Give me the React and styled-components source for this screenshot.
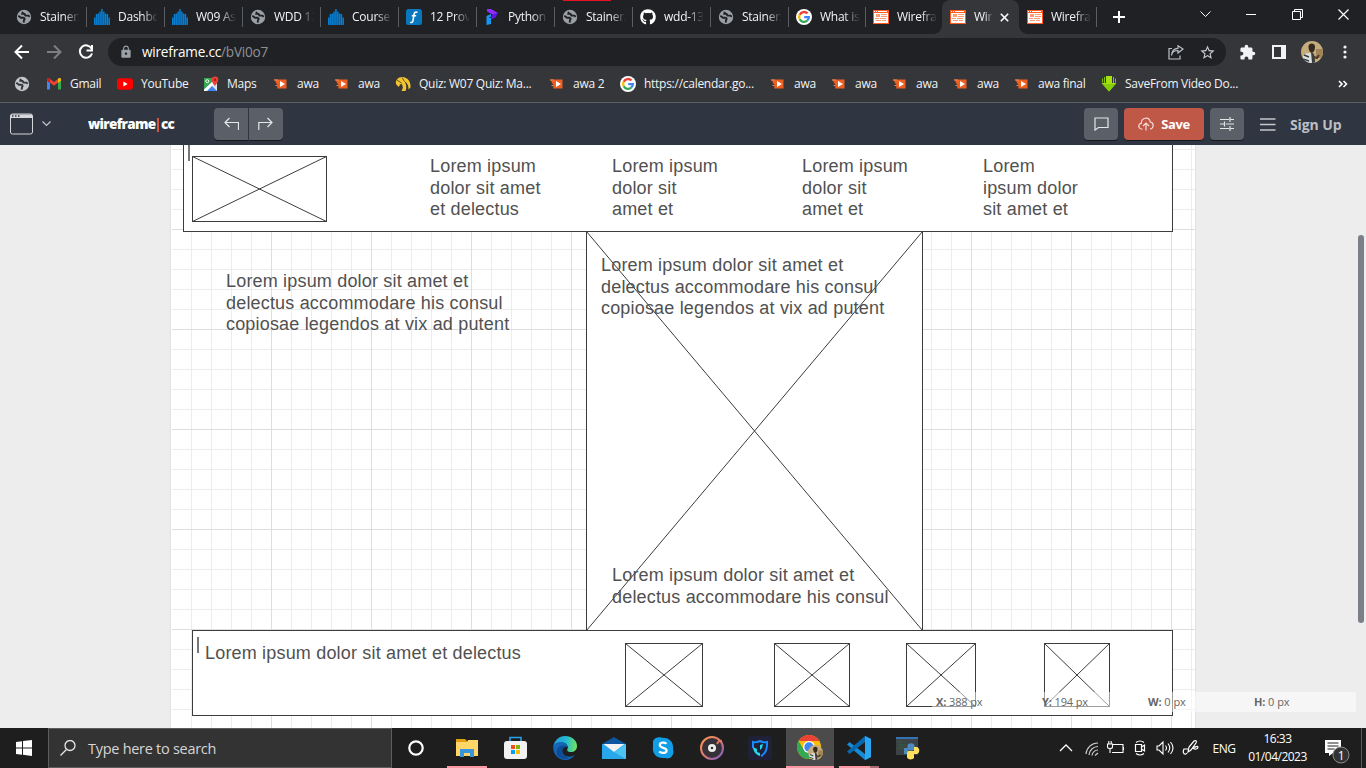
import React from 'react';
import styled, { createGlobalStyle, css } from 'styled-components';
import { MdExtension, MdStarBorder, MdLock } from 'react-icons/md';
import { FaGithub } from 'react-icons/fa';

const GlobalStyle = createGlobalStyle`
  * { box-sizing: border-box; }
  html, body { margin: 0; padding: 0; overflow: hidden; }
  body { font-family: "Open Sans", "Noto Sans", sans-serif; font-size: 12px; }
  svg { display: block; flex: none; }
`;

const Screen = styled.div`
  width: 1366px;
  height: 768px;
  display: flex;
  flex-direction: column;
  overflow: hidden;
  background: #ededed;
`;

/* ---------- Browser chrome ---------- */
const TabStrip = styled.div`
  position: relative;
  height: 34px;
  flex: none;
  display: flex;
  padding-left: 8px;
  background: #202124;
`;
const TopMark = styled.div`
  position: absolute;
  left: 563px;
  top: 0;
  width: 48px;
  height: 1px;
  background: #e81123;
`;
const Tab = styled.div`
  position: relative;
  width: ${p => p.$w}px;
  height: 34px;
  flex: none;
  display: flex;
  align-items: center;
  gap: 8px;
  padding-left: 8px;
  color: #f1f3f4;
  ${p => p.$divider && css`
    &::before {
      content: '';
      position: absolute;
      left: 0;
      top: 7px;
      width: 1px;
      height: 20px;
      background: #5a5d61;
    }
  `}
  ${p => p.$active && css`
    background: #35363a;
    border-radius: 8px 8px 0 0;
    &::before, &::after {
      content: '';
      position: absolute;
      bottom: 0;
      width: 8px;
      height: 8px;
    }
    &::before { left: -8px; background: radial-gradient(circle at 0 0, transparent 7.5px, #35363a 8px); }
    &::after { right: -8px; background: radial-gradient(circle at 100% 0, transparent 7.5px, #35363a 8px); }
  `}
`;
const TabTitle = styled.span`
  width: ${p => p.$w}px;
  flex: none;
  overflow: hidden;
  white-space: nowrap;
  line-height: 16px;
  letter-spacing: -0.25px;
  mask-image: linear-gradient(90deg, #000 ${p => p.$w - p.$fade}px, transparent ${p => p.$w + 1}px);
`;
const NewTab = styled.div`
  position: relative;
  display: flex;
  align-items: center;
  padding-left: 17px;
  flex: 1;
  &::before {
    content: '';
    position: absolute;
    left: 0;
    top: 7px;
    width: 1px;
    height: 20px;
    background: #5a5d61;
  }
`;
const WindowControls = styled.div`
  display: flex;
  width: 184px;
  height: 29px;
  flex: none;
`;
const WindowButton = styled.div`
  width: 46px;
  display: grid;
  place-items: center;
`;

const AddressRow = styled.div`
  height: 36px;
  flex: none;
  display: flex;
  align-items: center;
  padding: 0 15px 0 14px;
  background: #35363a;
`;
const NavButtons = styled.div`
  width: 94px;
  display: flex;
  gap: 16px;
`;
const Omnibox = styled.div`
  width: 1118px;
  height: 28px;
  flex: none;
  display: flex;
  align-items: center;
  gap: 15px;
  padding: 0 10px 0 11px;
  border-radius: 14px;
  background: #202124;
`;
const Url = styled.div`
  flex: 1;
  margin-left: -6px;
  font-size: 13.6px;
  line-height: 20px;
  letter-spacing: -0.22px;
  color: #fff;
  span { color: #8e9195; }
`;
const Extensions = styled.div`
  flex: 1;
  display: flex;
  align-items: center;
  justify-content: space-between;
  padding-left: 13px;
`;

const BookmarkBar = styled.div`
  height: 32px;
  flex: none;
  display: flex;
  align-items: center;
  padding: 0 18px 4px 14px;
  background: #35363a;
  color: #f1f3f4;
`;
const Bookmark = styled.div`
  width: ${p => p.$w}px;
  flex: none;
  display: flex;
  align-items: center;
  gap: 8px;
  white-space: nowrap;
  line-height: 16px;
  letter-spacing: -0.27px;
`;
const Overflow = styled.div`
  flex: 1;
  display: flex;
  justify-content: flex-end;
`;

/* ---------- Wireframe application ---------- */
const AppBar = styled.div`
  height: 43px;
  flex: none;
  display: flex;
  align-items: flex-start;
  padding: 5px 0 0 10px;
  border-top: 1px solid #5b5e63;
  background: #2f3541;
`;
const DeviceMenu = styled.div`
  width: 78px;
  height: 32px;
  display: flex;
  align-items: center;
  gap: 9px;
`;
const Brand = styled.div`
  width: 126px;
  font-size: 13.5px;
  font-weight: 800;
  line-height: 32px;
  letter-spacing: -0.68px;
  color: #fff;
  white-space: nowrap;
`;
const BrandBar = styled.i`
  display: inline-block;
  width: 2px;
  height: 14px;
  margin: 0 1.5px 0 2px;
  vertical-align: -3px;
  background: #d8543f;
`;
const ToolButton = styled.div`
  width: ${p => p.$w || 34}px;
  height: 32px;
  flex: none;
  display: flex;
  align-items: center;
  justify-content: center;
  gap: 7px;
  border-radius: ${p => p.$radius || '4px'};
  background: ${p => (p.$accent ? '#c05848' : '#5b5f68')};
  box-shadow: 0 1px 0 #15181d;
  color: #fff;
  font-size: 13px;
  font-weight: 700;
  letter-spacing: -0.4px;
`;
const HistoryGroup = styled.div`
  display: flex;
  gap: 1px;
  flex: 1;
`;
const Actions = styled.div`
  display: flex;
  gap: 6px;
`;
const SignUp = styled.div`
  width: 106px;
  height: 32px;
  flex: none;
  display: flex;
  align-items: center;
  gap: 14px;
  margin-left: 16px;
  color: #bcbfc4;
  font-size: 14px;
  font-weight: 700;
  letter-spacing: -0.1px;
  white-space: nowrap;
`;

const Workspace = styled.div`
  position: relative;
  flex: 1;
  overflow: hidden;
  padding: 0 171px;
  background: #ededed;
`;
const Canvas = styled.div`
  position: relative;
  width: 1024px;
  height: 583px;
  background-color: #fff;
  background-image:
    linear-gradient(90deg, #dedede 1px, transparent 1px),
    linear-gradient(#dedede 1px, transparent 1px),
    linear-gradient(90deg, #ececec 1px, transparent 1px),
    linear-gradient(#ececec 1px, transparent 1px);
  background-size: 100px 100px, 100px 100px, 20px 20px, 20px 20px;
  background-position: 0 0, 0 -16px, 0 0, 0 4px;
  box-shadow: inset 1px 0 #fff, 0 0 2px #ccc;
`;
const place = css`
  position: absolute;
  left: ${p => p.$x}px;
  top: ${p => p.$y}px;
`;
const Box = styled.div`
  ${place}
  width: ${p => p.$w}px;
  height: ${p => p.$h}px;
  border: 1px solid #3c3c3c;
  background: #fff;
`;
const Caret = styled.div`
  ${place}
  width: 2px;
  height: 16px;
  background: #777;
`;
const Copy = styled.div`
  ${place}
  font-family: "Liberation Sans", Arial, sans-serif;
  font-size: 18px;
  line-height: 21.6px;
  color: #515151;
  white-space: pre;
  letter-spacing: 0.18px;
`;
const ImageFrame = styled.svg`
  ${place}
`;
const Coordinates = styled.div`
  position: absolute;
  right: 10px;
  top: 547px;
  width: 424px;
  height: 20px;
  display: flex;
  padding-left: 4px;
  background: rgba(255, 255, 255, 0.5);
  color: #666;
  font-size: 11px;
  line-height: 20px;
`;
const Coordinate = styled.div`
  width: 106px;
  flex: none;
  letter-spacing: -0.2px;
  word-spacing: 0.3px;
`;
const Thumb = styled.div`
  position: absolute;
  right: 2px;
  top: 90px;
  width: 6px;
  height: 388px;
  border-radius: 3px;
  background: #7b7f87;
`;

/* ---------- Taskbar ---------- */
const Taskbar = styled.div`
  height: 40px;
  flex: none;
  display: flex;
  background: #1e1e1e;
`;
const StartButton = styled.div`
  width: 48px;
  display: grid;
  place-items: center;
`;
const Search = styled.div`
  width: 344px;
  border: 1px solid #5d5d5d;
  background: #333;
  display: flex;
  align-items: center;
  gap: 12px;
  padding-left: 11px;
  color: #d6d6d6;
  font-size: 14.5px;
  letter-spacing: -0.28px;
`;
const TaskItem = styled.div`
  position: relative;
  width: ${p => p.$w || 49}px;
  display: grid;
  place-items: center;
  background: ${p => (p.$active ? '#4b4b4b' : 'transparent')};
`;
const Running = styled.div`
  position: absolute;
  bottom: 0;
  left: ${p => p.$x || 0}px;
  width: ${p => p.$w}px;
  height: 2px;
  background: ${p => (p.$dim ? '#a86c74' : '#fb98a3')};
`;
const Tray = styled.div`
  flex: 1;
  display: flex;
  align-items: center;
  justify-content: flex-end;
  color: #fff;
`;
const TrayIcons = styled.div`
  display: flex;
  align-items: center;
  gap: 8px;
  margin-right: 4px;
`;
const Chevron = styled.div`
  margin-right: 4px;
`;
const Language = styled.div`
  width: 40px;
  text-align: center;
  letter-spacing: -0.4px;
`;
const Clock = styled.div`
  width: 67px;
  text-align: center;
  line-height: 18px;
  letter-spacing: -0.5px;
`;
const Notice = styled.div`
  width: 50px;
  padding: 8px 0 0 14px;
`;
const DesktopEdge = styled.div`
  width: 5px;
  height: 40px;
  border-left: 1px solid #5a5a5a;
`;

/* ---------- Icons ---------- */
const Globe = ({ c = '#9aa0a6', d = '#202124' }) => (
  <svg width="16" height="16" viewBox="0 0 16 16">
    <circle cx="8" cy="8" r="7.2" fill={c} />
    <path d="M2.300 6.800L5 8.700h2.200c1.700 0 1.800 1.700.8 2.300l-.3 2.600M6.800 2.800L6.300 4.900h2.200l1 1.700h3l1.200 1.300" fill="none" stroke={d} strokeWidth="1.900" />
  </svg>
);
const Bars = () => (
  <svg width="16" height="16" viewBox="0 0 16 16">
    <path d="M0 9h1.800V5h3.600V3h1.800V0h1.600v3h1.800v2h3.600v4H16v7H0z" fill="#0b4f80" />
    {[8.5, 5, 4.500, 2.500, 0, 2.500, 4.500, 5, 8.5].map((y, i) => (
      <rect key={i} x={i * 1.83} y={y} width="1.25" height={16 - y} fill="#0a7fd0" />
    ))}
  </svg>
);
const Function = () => (
  <svg width="16" height="16" viewBox="0 0 16 16">
    <rect width="16" height="16" rx="2.500" fill="#0877bd" />
    <path d="M11.500 3.500c-2.200-1.300-3.200.3-3.500 2.100L7 11.500c-.4 2-1.500 2.500-2.700 1.600M5.800 6.800h4.400" fill="none" stroke="#fff" strokeWidth="1.600" />
  </svg>
);
const Ribbon = () => (
  <svg width="16" height="16" viewBox="0 0 16 16">
    <path d="M3 0h4l6.500 3.800-.5 1.700H8.500L3 2.500z" fill="#8f2cff" />
    <path d="M13.500 3.800L12 8l-4.500 2.500L7 8l2-2.500z" fill="#6215e8" />
    <path d="M2.500 7L7 5v2.500L4.500 9H7v6l-4.500 1z" fill="#1797f5" />
  </svg>
);
const Google = ({ s = 16 }) => (
  <svg width={s} height={s} viewBox="0 0 16 16">
    <circle cx="8" cy="8" r="8" fill="#fff" />
    <g fill="none" strokeWidth="2.300">
      <path d="M11.500 4.400A4.900 4.900 0 0 0 3.700 5.700" stroke="#ea4335" />
      <path d="M3.700 5.700a5 5 0 0 0 0 4.600" stroke="#fbbc05" />
      <path d="M3.700 10.300a4.900 4.900 0 0 0 7.500 1.400" stroke="#34a853" />
      <path d="M11.200 11.700A4.700 4.700 0 0 0 12.900 8.100H8.200" stroke="#4285f4" />
    </g>
  </svg>
);
const WireIcon = () => (
  <svg width="16" height="14" viewBox="0 0 16 14">
    <path fill="#ff5a1f" d="M0 0h16v14H0z" />
    <path fill="#fff" d="M1 3h14v10H1zM1 1h1v1H1zM3 1h1v1H3zM5 1h9v1H5z" />
    <path d="M3 4h4v3H3zM8 4h6v1H8zM8 6h6v1H8zM2 8h4v1H2zM7 8h6v1H7zM3 10h5v1H3zM9 10h4v1H9z" fill="#ff9a74" />
  </svg>
);
const Awa = () => (
  <svg width="16" height="16" viewBox="0 0 16 16">
    <path d="M1 3.500h12.500v9H4.300V8.500L3 7l-.5-1.500z" fill="#ed5f20" />
    <path d="M1 3.500h4v1H1zM2.500 9h2v1h-2z" fill="#ed8a54" />
    <path d="M7 5l5 3-5 3z" fill="#fff" />
  </svg>
);
const Gmail = () => (
  <svg width="16" height="16" viewBox="0 0 16 16">
    <path d="M1 4v9.500h3V7z" fill="#4285f4" />
    <path d="M12 7v6.500h3V4z" fill="#34a853" />
    <path d="M1 3.500c0-1.400 1.500-1.800 2.500-1L8 6l4.500-3.500V6.300L8 9.700 3.500 6.300 1 4.500z" fill="#ea4335" />
    <path d="M12 3l.5-.5c1-.8 2.500-.4 2.500 1v1.300l-3 2.200z" fill="#fbbc04" />
    <path d="M1 3.500v1.300L4 7V3l-.5-.5C2.500 1.700 1 2.100 1 3.500z" fill="#c5221f" />
  </svg>
);
const YouTube = () => (
  <svg width="16" height="16" viewBox="0 0 16 16">
    <rect y="2.300" width="16" height="11.500" rx="3" fill="#f00" />
    <path d="M6.400 5.600v5l4.200-2.500z" fill="#fff" />
  </svg>
);
const Maps = () => (
  <svg width="16" height="16" viewBox="0 0 16 16">
    <path d="M1 2h13v13H1z" fill="#dfe5ea" />
    <path d="M1 2h10L8.500 7 1 14z" fill="#34a853" />
    <path d="M4 15l5-5 5 5z" fill="#4285f4" />
    <path d="M1 13.500L9 6l1.500 2L3.500 15H1z" fill="#fff" />
    <circle cx="4.300" cy="5.200" r="1.500" fill="none" stroke="#fff" />
    <path d="M12 10C9 6 8.700 5.500 8.700 3.700a3.300 3.300 0 0 1 6.600 0C15.300 5.500 14 7 12 10z" fill="#ea4335" />
    <circle cx="12" cy="3.700" r="1.200" fill="#a61d13" />
  </svg>
);
const Quiz = () => (
  <svg width="16" height="16" viewBox="0 0 16 16">
    <path d="M1 8C0 3 5 0 9.500 1.500c4 1 6.500 5 6 10l-2 2C13.800 9.500 12 6.500 9.500 5.500c2 3 2.500 6.500 1 9.500H6.500c2-3 1.500-6-.5-7.500L3.500 11z" fill="#f4c430" />
    <path d="M2 4l4.500 3M7 1.500l2.500 4" stroke="#65571f" />
  </svg>
);
const Download = () => (
  <svg width="16" height="16" viewBox="0 0 16 16">
    <path d="M5 0h6v7h4.500L8 15.500.5 7H5z" fill="#a5e010" />
    <path d="M3.500 1v6M1.500 2.500v4M12.500 1v6M14.500 2.500v4" stroke="#83c20b" />
    <path d="M8 15.500L14.500 8h-13z" fill="#86cc08" />
  </svg>
);
const Stroke = ({ w, h, vb, d, sw = 1, c = '#fff', ...rest }) => (
  <svg width={w} height={h} viewBox={vb || `0 0 ${w} ${h}`} fill="none" stroke={c} strokeWidth={sw} {...rest}>
    <path d={d} />
  </svg>
);
const Avatar = ({ s = 22 }) => (
  <svg width={s} height={s} viewBox="0 0 22 22">
    <defs><clipPath id={`face${s}`}><circle cx="11" cy="11" r="11" /></clipPath></defs>
    <g clipPath={`url(#face${s})`}>
      <path d="M0 0h22v22H0z" fill="#c5ad7b" />
      <path d="M15 8h7v9h-7z" fill="#a08457" />
      <path d="M1 22c0-7 2-10 7-10 4 0 6 3 6 10z" fill="#dce1df" />
      <path d="M3 14l5 2M2 18l6 2" stroke="#344046" strokeWidth="1.500" />
      <path d="M10 11c3 0 4 4 4 11h-3z" fill="#3b3d3c" />
      <path d="M7.500 5.500c0-4 6.500-4 6.500 0 0 3-1 6-3.200 6S7.500 8.500 7.500 5.500z" fill="#37291f" />
      <path d="M13 16l3 1 2-3" stroke="#503b2b" strokeWidth="2" fill="none" />
    </g>
  </svg>
);

const tabs = [
  ['Stainerz', Globe], ['Dashboard', Bars], ['W09 Assi', Bars], ['WDD 130', Globe], ['Course M', Bars],
  ['12 Provide', Function], ['Python', Ribbon], ['Stainerz', Globe], ['wdd-130', 'github'], ['Stainerz', Globe],
  ['What is a', Google], ['Wirefram', WireIcon], ['Wirefr', WireIcon, true], ['Wirefram', WireIcon],
];
const bookmarks = [
  ['', () => <Globe c="#c3c6ca" d="#35363a" />, 32], ['Gmail', Gmail, 71], ['YouTube', YouTube, 86], ['Maps', Maps, 70],
  ['awa', Awa, 61], ['awa', Awa, 61], ['Quiz: W07 Quiz: Ma...', Quiz, 154], ['awa 2', Awa, 71],
  ['https://calendar.go...', Google, 150], ['awa', Awa, 61], ['awa', Awa, 61], ['awa', Awa, 61], ['awa', Awa, 61],
  ['awa final', Awa, 87], ['SaveFrom Video Do...', Download, 150],
];

const Placeholder = ({ x, y, w, h }) => (
  <ImageFrame $x={x} $y={y} width={w} height={h}>
    <rect x=".5" y=".5" width={w - 1} height={h - 1} fill="#fff" stroke="#3c3c3c" />
    <path d={`M.5 .5L${w - 0.5} ${h - 0.5}M${w - 0.5} .5L.5 ${h - 0.5}`} stroke="#3c3c3c" />
  </ImageFrame>
);

const copy = [
  [259, 11, 'Lorem ipsum\ndolor sit amet\net delectus'],
  [441, 11, 'Lorem ipsum\ndolor sit\namet et'],
  [631, 11, 'Lorem ipsum\ndolor sit\namet et'],
  [812, 11, 'Lorem\nipsum dolor\nsit amet et'],
  [55, 126, 'Lorem ipsum dolor sit amet et\ndelectus accommodare his consul\ncopiosae legendos at vix ad putent'],
  [430, 110, 'Lorem ipsum dolor sit amet et\ndelectus accommodare his consul\ncopiosae legendos at vix ad putent'],
  [441, 420, 'Lorem ipsum dolor sit amet et\ndelectus accommodare his consul'],
  [34, 498, 'Lorem ipsum dolor sit amet et delectus'],
];

function BrowserChrome() {
  return (
    <>
      <TabStrip>
        <TopMark />
        {tabs.map(([title, Icon, active], i) => (
          <Tab key={i} $w={i < 10 ? 78 : 77} $active={active} $divider={i > 0 && i < 12}>
            {Icon === 'github' ? <FaGithub size={16} color="#fff" /> : <Icon />}
            <TabTitle $w={active ? 18 : 39} $fade={active ? 7 : 15}>{title}</TabTitle>
            {active && <Stroke w={9} h={9} d="M.8.8l7.400 7.400M8.200.8L.8 8.200" sw={1.600} />}
          </Tab>
        ))}
        <NewTab><Stroke w={12} h={12} d="M6 0v12M0 6h12" sw={2} /></NewTab>
        <WindowControls>
          <WindowButton><Stroke w={11} h={7} d="M.5.5l5 5 5-5" /></WindowButton>
          <WindowButton><Stroke w={10} h={1} d="M0 .5h10" /></WindowButton>
          <WindowButton><Stroke w={11} h={11} d="M.5 2.500h8v8h-8zM2.500 2.500v-2h8v8h-2" /></WindowButton>
          <WindowButton><Stroke w={11} h={11} d="M.5.5l10 10M10.500.5l-10 10" sw={1.200} /></WindowButton>
        </WindowControls>
      </TabStrip>
      <AddressRow>
        <NavButtons>
          <Stroke w={16} h={16} d="M15 8H2M8 1.500L1.500 8 8 14.500" sw={2} />
          <Stroke w={16} h={16} d="M1 8h13M8 1.500L14.500 8 8 14.500" sw={2} c="#7d7f83" />
          <Stroke w={16} h={16} d="M13.500 4.500A6.200 6.200 0 1 0 14 9.500M14 1v5.500H8.500" sw={2} />
        </NavButtons>
        <Omnibox>
          <MdLock size={14} color="#9aa0a6" />
          <Url>wireframe.cc<span>/bVi0o7</span></Url>
          <Stroke w={16} h={15} c="#bdc1c6" sw={1.200} d="M4 3.500H1v10.500h11v-3.500M3.500 10.500C4 7 6.500 5.500 10 5.500V8L15 4 10 .8v2.500C6 3.500 3.800 6 3.500 10.500z" />
          <MdStarBorder size={17} color="#c5c8cc" />
        </Omnibox>
        <Extensions>
          <MdExtension size={17} color="#f1f3f4" />
          <svg width="14" height="14" viewBox="0 0 14 14"><path fillRule="evenodd" d="M0 0h14v14H0zM2 2v10h7V2z" fill="#f1f3f4" /></svg>
          <Avatar />
          <svg width="12" height="14" viewBox="0 0 12 14" fill="#f1f3f4"><circle cx="6" cy="2" r="1.600" /><circle cx="6" cy="7" r="1.600" /><circle cx="6" cy="12" r="1.600" /></svg>
        </Extensions>
      </AddressRow>
      <BookmarkBar>
        {bookmarks.map(([label, Icon, w], i) => <Bookmark key={i} $w={w}><Icon />{label}</Bookmark>)}
        <Overflow><Stroke w={10} h={8} d="M1 1l3 3-3 3M5.500 1l3 3-3 3" sw={1.600} /></Overflow>
      </BookmarkBar>
    </>
  );
}

function EditorBar() {
  return (
    <AppBar>
      <DeviceMenu>
        <svg width="23" height="22" viewBox="0 0 23 22">
          <rect x=".5" y="1" width="22" height="20" rx="2" fill="none" stroke="#d5d7da" />
          <path d="M1 1.500h21V5H1z" fill="#d5d7da" />
          <path d="M2 3h1.500M5 3h1.500M8 3h1.500" stroke="#2f3541" strokeWidth="1.500" />
        </svg>
        <Stroke w={9} h={6} d="M.5.500l4 4 4-4" c="#c2c5ca" sw={1.200} />
      </DeviceMenu>
      <Brand>wireframe<BrandBar />cc</Brand>
      <HistoryGroup>
        <ToolButton $radius="4px 0 0 4px"><Stroke w={16} h={14} c="#e5e6e8" sw={1.200} d="M6.500 1L2 5.500 6.500 10M2 5.500h13.500V13" /></ToolButton>
        <ToolButton $radius="0 4px 4px 0"><Stroke w={16} h={14} c="#e5e6e8" sw={1.200} d="M9.500 1L14 5.500 9.500 10M14 5.500H.8V13" /></ToolButton>
      </HistoryGroup>
      <Actions>
        <ToolButton><Stroke w={15} h={14} c="#e5e6e8" sw={1.200} d="M1 1h13v9.500H4.500L1 13z" /></ToolButton>
        <ToolButton $w={80} $accent>
          <Stroke w={16} h={14} c="#f4dcd8" sw={1.200} d="M4.500 12C-.2 12.500-.2 6.500 3.300 6.300 3.300 0 11.300-.5 12.300 5c4 .5 3.800 6.500-.3 7M8 13.500V6.500M5 9l3-3 3 3" />Save
        </ToolButton>
        <ToolButton><Stroke w={14} h={14} c="#e5e6e8" sw={1.200} d="M0 2.500h9M10 0v5M10 2.500h4M0 7h4M4.500 4.500v5M6 7h8M0 11.500h9M10 9v5M10 11.500h4" /></ToolButton>
      </Actions>
      <SignUp><Stroke w={16} h={13} c="#c5c8cc" sw={1.300} d="M0 1h15.500M0 6.500h15.500M0 12h15.500" />Sign Up</SignUp>
    </AppBar>
  );
}

function WireframeCanvas() {
  return (
    <Workspace>
      <Canvas>
        <Box $x={12} $y={-20} $w={990} $h={107} />
        <Caret $x={17} $y={0} />
        <Placeholder x={21} y={11} w={135} h={66} />
        <Placeholder x={415} y={86} w={337} h={400} />
        <Box $x={21} $y={485} $w={981} $h={86} />
        <Caret $x={26} $y={492} />
        <Placeholder x={454} y={498} w={78} h={64} />
        <Placeholder x={603} y={498} w={76} h={64} />
        <Placeholder x={735} y={498} w={70} h={64} />
        <Placeholder x={873} y={498} w={66} h={64} />
        {copy.map(([x, y, text], i) => <Copy key={i} $x={x} $y={y}>{text}</Copy>)}
      </Canvas>
      <Coordinates>
        <Coordinate><b>X:</b> 388 px</Coordinate>
        <Coordinate><b>Y:</b> 194 px</Coordinate>
        <Coordinate><b>W:</b> 0 px</Coordinate>
        <Coordinate><b>H:</b> 0 px</Coordinate>
      </Coordinates>
      <Thumb />
    </Workspace>
  );
}

function WindowsTaskbar() {
  return (
    <Taskbar>
      <StartButton><svg width="16" height="16" viewBox="0 0 16 16" fill="#fff"><path d="M0 2l6-.8v6.300H0zM7 1.100L16 0v7.500H7zM0 8.500h6v6.300L0 14zM7 8.500h9V16l-9-1.200z" /></svg></StartButton>
      <Search><Stroke w={16} h={16} d="M6.200 9.800L.5 15.500M15 5.500a5 5 0 1 1-10 0 5 5 0 0 1 10 0z" c="#e6e6e6" sw={1.300} />Type here to search</Search>
      <TaskItem $w={48}><svg width="16" height="16"><circle cx="8" cy="8" r="6.700" fill="none" stroke="#fff" strokeWidth="2.200" /></svg></TaskItem>
      <TaskItem $w={54}>
        <svg width="22" height="18" viewBox="0 0 22 18"><path d="M0 0h9l2 2v3H0z" fill="#e0a013" /><path d="M0 3h11l1-2h10v16H0z" fill="#ffd667" /><path d="M4 10h14v8h-4v-4H8v4H4z" fill="#3a94dc" /></svg>
        <Running $x={7} $w={40} />
      </TaskItem>
      <TaskItem $w={43}>
        <svg width="23" height="24" viewBox="0 0 23 24"><path d="M6 6V1.500h11V6" fill="none" stroke="#27a1e8" strokeWidth="1.600" /><rect y="5" width="23" height="18" rx="3" fill="#f2f2f2" /><path d="M7 9h4v4H7z" fill="#f04e23" /><path d="M12 9h4v4h-4z" fill="#7eb900" /><path d="M7 14h4v4H7z" fill="#00a2ed" /><path d="M12 14h4v4h-4z" fill="#ffb800" /></svg>
      </TaskItem>
      <TaskItem $w={56}>
        <svg width="24" height="24" viewBox="0 0 24 24">
          <defs><linearGradient id="edge" x1="0" y1=".3" x2="1" y2=".4"><stop stopColor="#2198dc" /><stop offset=".55" stopColor="#25bbd0" /><stop offset="1" stopColor="#6fe35c" /></linearGradient></defs>
          <path d="M.3 11C1 4.500 6 0 12 0c7 0 12 4.500 12 10 0 4-3 6-6 6-3.500 0-4.500-1.500-3.500-3C16 10 13 6.500 9 6.500 4.500 6.500 1.500 8.500.3 11z" fill="url(#edge)" />
          <path d="M.2 12C0 8 4 6.300 8 6.300c3.500 0 6 2 6.300 4.700-2-1-5.500 1-5 4.500.5 3.500 4 5.500 8 5 2-.2 4-1 5-2C20 22 16.500 24 12 24 5.500 24 .5 18.500.2 12z" fill="#1565b8" />
          <path d="M9.300 14c-.5 4.500 3 7 7.500 6.700-4 4-11 2.300-12.800-2C2.500 14 5 10 9.800 9.500c2 0 4 .7 4.500 1.500-2-.5-4.600.7-5 3z" fill="#0e4c96" />
        </svg>
      </TaskItem>
      <TaskItem $w={42}><svg width="24" height="22" viewBox="0 0 24 22"><path d="M0 7l12-7 12 7v4H0z" fill="#0d579f" /><path d="M0 7h24v15H0z" fill="#28a8ea" /><path d="M1.500 7h21L12 15z" fill="#f3f3f3" /><path d="M24 7v15L12 15z" fill="#4cc5f2" /></svg></TaskItem>
      <TaskItem $w={56}><svg width="22" height="22" viewBox="0 0 22 22"><path d="M1 4C3 0 7 0 10 .7 18 0 22 6 21 12c2 6-3 11-8 9C4 22 0 16 1 10z" fill="#119ee6" /><path d="M14.500 6.800C12.500 5 7.800 5.300 7.800 8c0 3.500 6.800 2.200 6.800 5.500 0 3-5.400 3-7.400 1" fill="none" stroke="#fff" strokeWidth="2.200" /></svg></TaskItem>
      <TaskItem $w={42}>
        <svg width="24" height="24" viewBox="0 0 24 24"><defs><linearGradient id="ring" x2="1" y2="1"><stop stopColor="#ff9b4c" /><stop offset=".5" stopColor="#dc7774" /><stop offset="1" stopColor="#7560ce" /></linearGradient></defs><circle cx="12" cy="12" r="11" fill="#363137" stroke="url(#ring)" strokeWidth="2" /><circle cx="12" cy="12" r="4" fill="#eee" /><circle cx="12" cy="12" r="1.300" fill="#333" /><path d="M17 8l2-3h3" stroke="#e5775b" strokeWidth="2" fill="none" /></svg>
      </TaskItem>
      <TaskItem $w={53}><svg width="24" height="24" viewBox="0 0 24 24"><rect width="24" height="24" rx="4" fill="#202039" /><path d="M5 12V6c3 1 5 0 7-1 2 1 4 2 7 1 .5 7-1 11.500-6 14" stroke="#168bff" strokeWidth="2" fill="none" /><path d="M5 11l4 2v3l3 1v3c-4-1-7-5-7-9zM12 9l3-1-1 4-2 2z" fill="#20d6e9" /></svg></TaskItem>
      <TaskItem $w={48} $active>
        <svg width="26" height="26" viewBox="0 0 26 26">
          <circle cx="12" cy="12" r="12" fill="#fbbc05" /><path d="M1.600 6A12 12 0 0 1 22.400 6H12z" fill="#ea4335" /><path d="M1.600 6A12 12 0 0 0 12 24l5-9H7z" fill="#34a853" /><circle cx="12" cy="12" r="6" fill="#fff" /><circle cx="12" cy="12" r="4.700" fill="#4285f4" />
          <g transform="translate(11 10)"><Avatar s={15} /></g>
        </svg>
        <Running $w={48} />
      </TaskItem>
      <TaskItem $w={49}>
        <svg width="24" height="24" viewBox="0 0 24 24"><path d="M18 0l6 3v18l-6 3L0 8.500 2.500 6 18 18z" fill="#168bd5" /><path d="M18 0L0 15.500 2.500 18 18 6z" fill="#0868ae" /><path d="M18 0l6 3v18l-6 3z" fill="#2aa5f1" /></svg>
        <Running $x={5} $w={31} /><Running $x={36} $w={9} $dim />
      </TaskItem>
      <TaskItem $w={50}>
        <svg width="24" height="24" viewBox="0 0 24 24"><path d="M0 1h22v18H0z" fill="#3c4245" /><path d="M0 1h22v2H0z" fill="#3572b3" /><path d="M2 6h5M2 9h8M2 12h6" stroke="#2f603a" /><path d="M12 8h6v6h-6v4H8v-6h5z" fill="#4b8bbe" /><circle cx="15" cy="11" r="3.700" fill="#4b8bbe" /><path d="M12 15h6v-4h3c3 1 3 6 0 7h-3v4c-1 2-7 2-7-1v-4z" fill="#ffe05e" /></svg>
      </TaskItem>
      <Tray>
        <TrayIcons>
          <Chevron><Stroke w={14} h={8} d="M1 7l6-6 6 6" sw={1.300} /></Chevron>
          <Stroke w={14} h={16} d="M1 14A12 12 0 0 1 13 3M4 15A9 9 0 0 1 13 6.500M7 15.500A6 6 0 0 1 13 10M10 15.500l3-2.500" c="#ccc" sw={1.200} />
          <Stroke w={17} h={14} d="M6 3.500h10v8H5M16.500 6v3M.5 3h5v3c0 2-5 2-5 0zM1.800 3V0M4.200 3V0M3 7.500V12" sw={1.100} />
          <Stroke w={16} h={16} d="M3.500 4.500h6v7h-6zM9.500 7l3-2v6l-3-2M4 2.500q4-3 8 0M4 13.500q4 3 8 0" sw={1.200} />
          <Stroke w={18} h={14} d="M1 5h2l4-4v12L3 9H1zM9.500 4.500q2 2.500 0 5M12 2.500q3.500 4.500 0 9M14.500 1q5 6 0 12" sw={1.100} />
          <Stroke w={18} h={16} d="M6 12l1-5 5-6c2-1 3 0 2 2L9 10l-3 2zM6 9H2c-2 4 1 7 3 4M11 7c3 1 4-2 5 0 0 2-3 3-5 1" sw={1.200} />
        </TrayIcons>
        <Language>ENG</Language>
        <Clock>16:33<br />01/04/2023</Clock>
        <Notice>
          <svg width="26" height="26" viewBox="0 0 26 26"><path d="M0 1h16v13H8l-4 3v-3H0z" fill="#fff" /><path d="M2.500 4h11M2.500 7h11M2.500 10h7" stroke="#222" /><circle cx="16" cy="16" r="8" fill="#333" stroke="#8a8a8a" /><text x="12.700" y="20.500" fill="#fff" fontSize="12">1</text></svg>
        </Notice>
        <DesktopEdge />
      </Tray>
    </Taskbar>
  );
}

export default function App() {
  return (
    <Screen>
      <GlobalStyle />
      <BrowserChrome />
      <EditorBar />
      <WireframeCanvas />
      <WindowsTaskbar />
    </Screen>
  );
}
